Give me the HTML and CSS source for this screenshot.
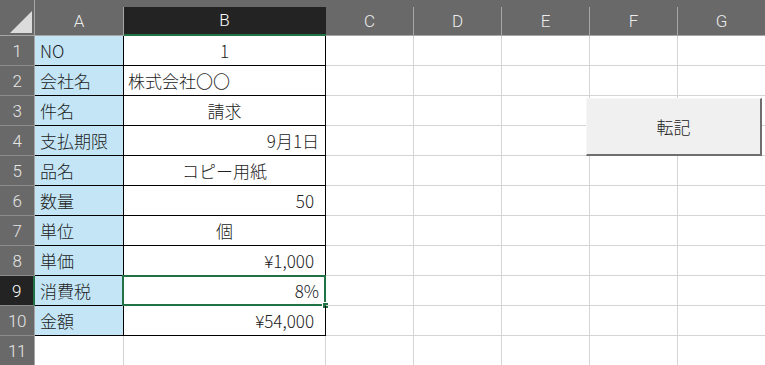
FILE: index.html
```html
<!DOCTYPE html>
<html lang="ja">
<head>
<meta charset="utf-8">
<title>Sheet</title>
<link rel="stylesheet" href="styles.css">
</head>
<body>
<div class="sheet">
  <div class="corner"><svg width="35" height="36" viewBox="0 0 35 36"><polygon points="10,33 32,11 32,33" fill="#dcdcdc"/></svg></div>
  <div class="colhdr"><span>A</span></div>
  <div class="colhdr sel"><span>B</span></div>
  <div class="colhdr"><span>C</span></div>
  <div class="colhdr"><span>D</span></div>
  <div class="colhdr"><span>E</span></div>
  <div class="colhdr"><span>F</span></div>
  <div class="colhdr"><span>G</span></div>

  <div class="rowhdr">1</div><div class="cell ka">NO</div><div class="cell kb c">1</div><div class="cell"></div><div class="cell"></div><div class="cell"></div><div class="cell"></div><div class="cell"></div>
  <div class="rowhdr">2</div><div class="cell ka">会社名</div><div class="cell kb l">株式会社〇〇</div><div class="cell"></div><div class="cell"></div><div class="cell"></div><div class="cell"></div><div class="cell"></div>
  <div class="rowhdr">3</div><div class="cell ka">件名</div><div class="cell kb c">請求</div><div class="cell"></div><div class="cell"></div><div class="cell"></div><div class="cell"></div><div class="cell"></div>
  <div class="rowhdr">4</div><div class="cell ka">支払期限</div><div class="cell kb r">9月1日</div><div class="cell"></div><div class="cell"></div><div class="cell"></div><div class="cell"></div><div class="cell"></div>
  <div class="rowhdr">5</div><div class="cell ka">品名</div><div class="cell kb c">コピー用紙</div><div class="cell"></div><div class="cell"></div><div class="cell"></div><div class="cell"></div><div class="cell"></div>
  <div class="rowhdr">6</div><div class="cell ka">数量</div><div class="cell kb rr">50</div><div class="cell"></div><div class="cell"></div><div class="cell"></div><div class="cell"></div><div class="cell"></div>
  <div class="rowhdr">7</div><div class="cell ka">単位</div><div class="cell kb c">個</div><div class="cell"></div><div class="cell"></div><div class="cell"></div><div class="cell"></div><div class="cell"></div>
  <div class="rowhdr">8</div><div class="cell ka">単価</div><div class="cell kb rr">¥1,000</div><div class="cell"></div><div class="cell"></div><div class="cell"></div><div class="cell"></div><div class="cell"></div>
  <div class="rowhdr selrow">9</div><div class="cell ka">消費税</div><div class="cell kb r active">8%<i class="frame"></i><i class="handle"></i></div><div class="cell"></div><div class="cell"></div><div class="cell"></div><div class="cell"></div><div class="cell"></div>
  <div class="rowhdr">10</div><div class="cell ka">金額</div><div class="cell kb rr">¥54,000</div><div class="cell"></div><div class="cell"></div><div class="cell"></div><div class="cell"></div><div class="cell"></div>
  <div class="rowhdr">11</div><div class="cell"></div><div class="cell"></div><div class="cell"></div><div class="cell"></div><div class="cell"></div><div class="cell"></div><div class="cell"></div>

  <div class="btn">転記</div>
</div>
</body>
</html>
```

FILE: styles.css
```css
html, body {
  margin: 0;
  padding: 0;
  background: #ffffff;
  overflow: hidden;
}
.sheet {
  position: relative;
  display: grid;
  grid-template-columns: 35px 89px 202px 88px 88px 88px 88px 88px;
  grid-template-rows: 36px repeat(11, 30px);
  width: 766px;
  font-family: "Noto Sans CJK JP", "Noto Sans", sans-serif;
  font-weight: 300;
  font-size: 16px;
  color: #222222;
}
.corner {
  background: #696969;
  border-right: 1px solid #a6a6a6;
  border-bottom: 1px solid #a6a6a6;
  box-sizing: border-box;
}
.corner svg { display: block; }
.colhdr {
  background: #696969;
  padding-top: 7px;
  box-sizing: border-box;
  border-bottom: 1px solid #a6a6a6;
  display: flex;
}
.colhdr span {
  flex: 1;
  display: flex;
  align-items: center;
  justify-content: center;
  border-right: 1px solid #a6a6a6;
  color: #ececec;
  font-family: Roboto, "Noto Sans", sans-serif;
  font-weight: 300;
  font-size: 17px;
  padding-bottom: 1px;
}
.colhdr.sel {
  border-bottom: 2px solid #217346;
}
.colhdr.sel span {
  background: #232323;
  color: #ffffff;
  border-right-color: #232323;
}
.rowhdr {
  background: #696969;
  color: #e6e6e6;
  box-sizing: border-box;
  border-right: 1px solid #a6a6a6;
  border-bottom: 1px solid #8c8c8c;
  display: flex;
  align-items: center;
  justify-content: center;
  font-family: Roboto, "Noto Sans", sans-serif;
  font-weight: 300;
  font-size: 17px;
  letter-spacing: -0.5px;
}
.rowhdr.selrow {
  background: #232323;
  color: #ffffff;
  border-right: 2px solid #217346;
}
.cell {
  box-sizing: border-box;
  border-right: 1px solid #d4d4d4;
  border-bottom: 1px solid #d4d4d4;
  display: flex;
  align-items: center;
  white-space: nowrap;
  padding: 0 4px;
  position: relative;
}
.ka {
  background: #c3e5f5;
  border-right: 1px solid #000;
  border-bottom: 1px solid #000;
  font-size: 17px;
  padding-left: 5px;
}
.kb {
  border-right: 1px solid #000;
  border-bottom: 1px solid #000;
  font-size: 17px;
}
.l { justify-content: flex-start; padding-left: 4px; }
.c { justify-content: center; }
.r { justify-content: flex-end; padding-right: 6px; }
.rr { justify-content: flex-end; padding-right: 11px; }
.frame {
  position: absolute;
  left: -2px;
  top: -1px;
  right: -1px;
  bottom: -1px;
  border: 2px solid #217346;
}
.handle {
  position: absolute;
  right: -3px;
  bottom: -3px;
  width: 5px;
  height: 5px;
  background: #217346;
  border: 1px solid #ffffff;
  border-right: none;
  border-bottom: none;
}
.btn {
  position: absolute;
  left: 586px;
  top: 98px;
  width: 176px;
  height: 58px;
  box-sizing: border-box;
  background: #f0f0f0;
  border-top: 1px solid #f7f7f7;
  border-left: 1px solid #f7f7f7;
  border-right: 2px solid #6e6e6e;
  border-bottom: 2px solid #6e6e6e;
  display: flex;
  align-items: center;
  justify-content: center;
  font-family: "Noto Sans CJK JP", sans-serif;
  font-weight: 300;
  font-size: 17px;
  color: #222;
}
```
